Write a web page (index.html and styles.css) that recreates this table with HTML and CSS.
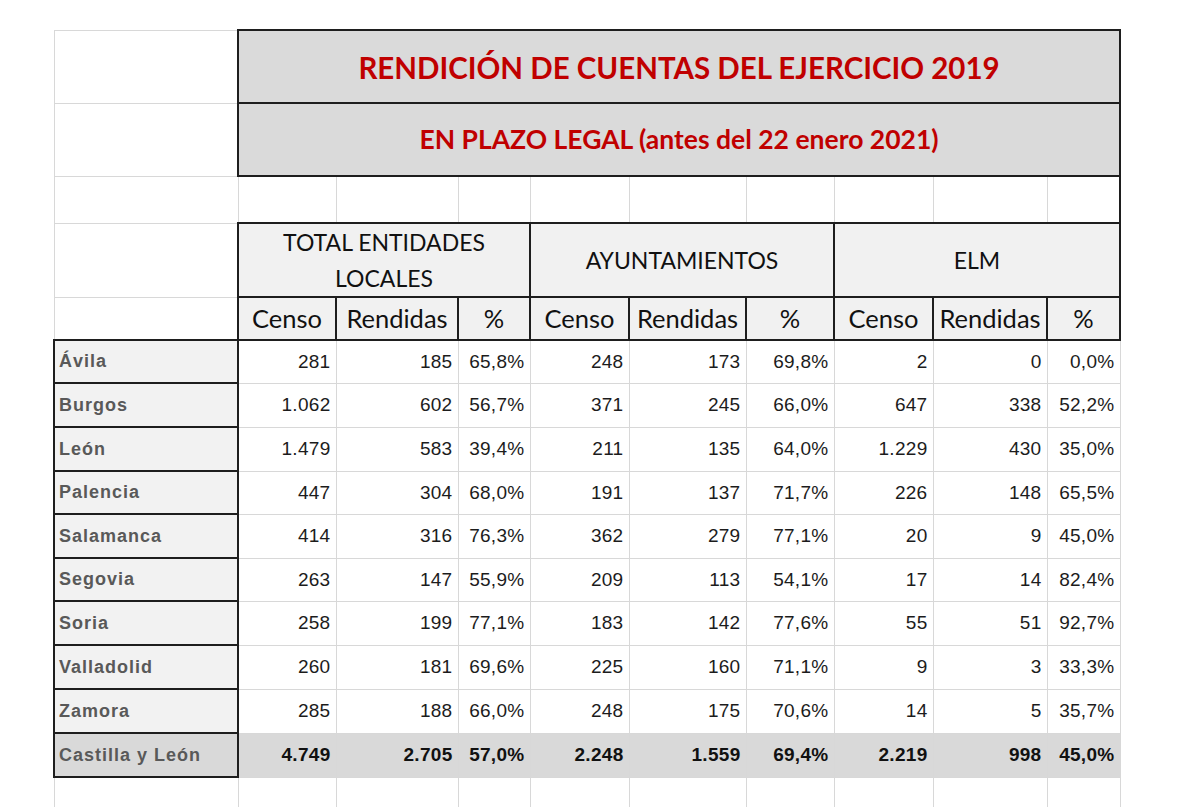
FILE: index.html
```html
<!DOCTYPE html>
<html lang="es">
<head>
<meta charset="utf-8">
<title>Rendición de cuentas del ejercicio 2019</title>
<link rel="stylesheet" href="styles.css">
</head>
<body>
<div class="page">
<table class="sheet">
  <colgroup>
    <col class="c-label">
    <col class="c-censo1"><col class="c-rend1"><col class="c-pct1">
    <col class="c-censo2"><col class="c-rend2"><col class="c-pct2">
    <col class="c-censo3"><col class="c-rend3"><col class="c-pct3">
  </colgroup>
  <tr class="r-title">
    <td></td>
    <td class="title" colspan="9">RENDICIÓN DE CUENTAS DEL EJERCICIO 2019</td>
  </tr>
  <tr class="r-sub">
    <td></td>
    <td class="subtitle" colspan="9">EN PLAZO LEGAL (antes del 22 enero 2021)</td>
  </tr>
  <tr class="r-blank">
    <td></td><td></td><td></td><td></td><td></td><td></td><td></td><td></td><td></td><td class="edge"></td>
  </tr>
  <tr class="r-group">
    <td></td>
    <td class="group" colspan="3">TOTAL ENTIDADES<br>LOCALES</td>
    <td class="group" colspan="3">AYUNTAMIENTOS</td>
    <td class="group" colspan="3">ELM</td>
  </tr>
  <tr class="r-head">
    <td></td>
    <td class="head">Censo</td><td class="head">Rendidas</td><td class="head">%</td>
    <td class="head">Censo</td><td class="head">Rendidas</td><td class="head">%</td>
    <td class="head">Censo</td><td class="head">Rendidas</td><td class="head">%</td>
  </tr>
  <tr class="r-data h43">
    <td class="label">Ávila</td>
    <td class="num">281</td><td class="num">185</td><td class="num">65,8%</td>
    <td class="num">248</td><td class="num">173</td><td class="num">69,8%</td>
    <td class="num">2</td><td class="num">0</td><td class="num">0,0%</td>
  </tr>
  <tr class="r-data">
    <td class="label">Burgos</td>
    <td class="num">1.062</td><td class="num">602</td><td class="num">56,7%</td>
    <td class="num">371</td><td class="num">245</td><td class="num">66,0%</td>
    <td class="num">647</td><td class="num">338</td><td class="num">52,2%</td>
  </tr>
  <tr class="r-data">
    <td class="label">León</td>
    <td class="num">1.479</td><td class="num">583</td><td class="num">39,4%</td>
    <td class="num">211</td><td class="num">135</td><td class="num">64,0%</td>
    <td class="num">1.229</td><td class="num">430</td><td class="num">35,0%</td>
  </tr>
  <tr class="r-data h43">
    <td class="label">Palencia</td>
    <td class="num">447</td><td class="num">304</td><td class="num">68,0%</td>
    <td class="num">191</td><td class="num">137</td><td class="num">71,7%</td>
    <td class="num">226</td><td class="num">148</td><td class="num">65,5%</td>
  </tr>
  <tr class="r-data">
    <td class="label">Salamanca</td>
    <td class="num">414</td><td class="num">316</td><td class="num">76,3%</td>
    <td class="num">362</td><td class="num">279</td><td class="num">77,1%</td>
    <td class="num">20</td><td class="num">9</td><td class="num">45,0%</td>
  </tr>
  <tr class="r-data h43">
    <td class="label">Segovia</td>
    <td class="num">263</td><td class="num">147</td><td class="num">55,9%</td>
    <td class="num">209</td><td class="num">113</td><td class="num">54,1%</td>
    <td class="num">17</td><td class="num">14</td><td class="num">82,4%</td>
  </tr>
  <tr class="r-data">
    <td class="label">Soria</td>
    <td class="num">258</td><td class="num">199</td><td class="num">77,1%</td>
    <td class="num">183</td><td class="num">142</td><td class="num">77,6%</td>
    <td class="num">55</td><td class="num">51</td><td class="num">92,7%</td>
  </tr>
  <tr class="r-data">
    <td class="label">Valladolid</td>
    <td class="num">260</td><td class="num">181</td><td class="num">69,6%</td>
    <td class="num">225</td><td class="num">160</td><td class="num">71,1%</td>
    <td class="num">9</td><td class="num">3</td><td class="num">33,3%</td>
  </tr>
  <tr class="r-data">
    <td class="label">Zamora</td>
    <td class="num">285</td><td class="num">188</td><td class="num">66,0%</td>
    <td class="num">248</td><td class="num">175</td><td class="num">70,6%</td>
    <td class="num">14</td><td class="num">5</td><td class="num">35,7%</td>
  </tr>
  <tr class="r-data r-total">
    <td class="label">Castilla y León</td>
    <td class="num">4.749</td><td class="num">2.705</td><td class="num">57,0%</td>
    <td class="num">2.248</td><td class="num">1.559</td><td class="num">69,4%</td>
    <td class="num">2.219</td><td class="num">998</td><td class="num">45,0%</td>
  </tr>
  <tr class="r-tail">
    <td></td><td></td><td></td><td></td><td></td><td></td><td></td><td></td><td></td><td></td>
  </tr>
</table>
</div>
</body>
</html>
```

FILE: styles.css
```css
html, body {
  margin: 0;
  padding: 0;
  background: #ffffff;
}

.page {
  padding: 29px 0 0 53px;
}

.sheet {
  border-collapse: collapse;
  table-layout: fixed;
  width: 1066px;
  font-family: "Liberation Sans", Arial, sans-serif;
}

.c-label { width: 184px; }
.c-censo1 { width: 98px; }
.c-rend1 { width: 122px; }
.c-pct1 { width: 72px; }
.c-censo2 { width: 99px; }
.c-rend2 { width: 117px; }
.c-pct2 { width: 88px; }
.c-censo3 { width: 99px; }
.c-rend3 { width: 114px; }
.c-pct3 { width: 73px; }

.sheet td {
  border: 1px solid #d8d8d8;
  padding: 0 5px;
  overflow: hidden;
  white-space: nowrap;
}

.r-title { height: 73px; }
.r-sub { height: 73px; }
.r-blank { height: 47px; }
.r-group { height: 74px; }
.r-head { height: 43px; }
.r-data { height: 44px; }
.r-data.h43 { height: 43px; }
.r-tail { height: 40px; }

.sheet td.title,
.sheet td.subtitle {
  border: 2px solid #1e1e1e;
  background: #dadada;
  color: #c00000;
  font-family: Lato, "Open Sans", sans-serif;
  font-weight: 700;
  text-align: center;
}

.sheet td.title {
  font-size: 29.5px;
  padding-top: 2px;
}

.sheet td.subtitle {
  font-size: 26.5px;
  padding-bottom: 2px;
}

.sheet td.edge {
  border-right: 2px solid #1e1e1e;
}

.sheet td.group,
.sheet td.head {
  border: 2px solid #1e1e1e;
  background: #f1f1f1;
  color: #111111;
  font-family: Lato, "Open Sans", sans-serif;
  font-weight: 400;
  text-align: center;
}

.sheet td.group {
  font-size: 23px;
  line-height: 36px;
}

.sheet td.head {
  font-size: 25.5px;
  padding-bottom: 2px;
}

.num {
  text-align: right;
  font-size: 19px;
  letter-spacing: 0.3px;
  color: #1c1c1c;
}

.sheet td.label {
  border: 2px solid #1e1e1e;
  background: #f2f2f2;
  color: #595959;
  font-weight: 700;
  font-size: 18px;
  letter-spacing: 1px;
  text-align: left;
  padding-left: 4px;
}

.r-total td {
  background: #d9d9d9;
}

.r-total .num {
  font-weight: 700;
  color: #111111;
}

.sheet .r-total td.label {
  background: #d9d9d9;
}
```
